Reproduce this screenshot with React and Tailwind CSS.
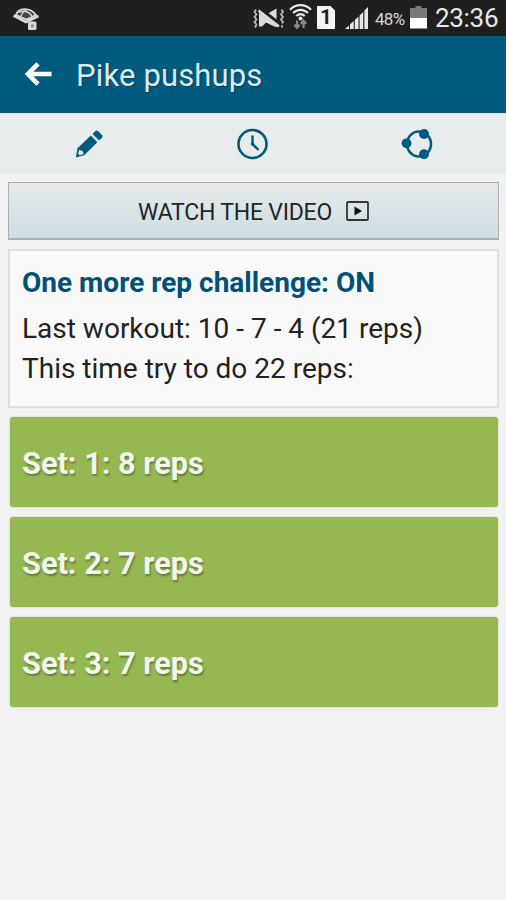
import React from 'react';

const sets = [
  { id: 1, reps: 8 },
  { id: 2, reps: 7 },
  { id: 3, reps: 7 },
];

const StatusBar = () => (
  <div className="h-9 bg-[#1f1f1f] flex items-center text-[#e8e8e8] whitespace-nowrap">
    <svg className="w-7 h-9 ml-3 shrink-0" viewBox="0 0 28 36" fill="none">
      <path d="M1.500 15.500 L14 22 L26.500 16" stroke="#dadada" strokeWidth="2.600" />
      <path d="M4 15 C6 7.500 18 7 24 15 L14.500 19.500 Z" fill="#444444" stroke="#dadada" strokeWidth="1.800" />
      <path d="M6.500 12.500 C10 10.500 16 10.500 20 16 M9 16.500 C10 13 12 11 15 9.500" stroke="#dadada" strokeWidth="1.300" />
      <rect x="16" y="21.500" width="8.500" height="8.500" rx="1.500" fill="#d8d8d8" />
      <rect x="19" y="24.500" width="2.800" height="2.800" fill="#8a8a8a" />
    </svg>

    <div className="flex-1" />

    {/* mute / vibrate */}
    <svg className="w-8 h-9 shrink-0" viewBox="0 0 32 36" fill="none">
      <path d="M3 9.500 L1.500 12 L3.500 14.500 L1.500 17 L3.500 19.500 L1.500 22 L3.500 24.500 L2 27.500 M28.500 9.500 L30 12 L28 14.500 L30 17 L28 19.500 L30 22 L28 24.500 L29.500 27.500" stroke="#b8b8b8" strokeWidth="1.800" />
      <path d="M6 11 V26.500 H9 L13 22.500 L23.500 27.500 V8.500 L14 14 Z" fill="#dcdcdc" />
      <path d="M5.500 8.500 L28 26" stroke="#1f1f1f" strokeWidth="5" />
      <path d="M5.500 10.500 L26 26.500" stroke="#dcdcdc" strokeWidth="2.500" />
    </svg>

    {/* wifi */}
    <svg className="w-6 h-9 ml-1 shrink-0" viewBox="0 0 24 36" fill="none">
      <path d="M1 9.700 C7 3.700 16 3.700 22 9.700 M4 13 C8.500 8.700 14.500 8.700 19 13 M7.300 16 C10 13.600 13 13.600 15.700 16" stroke="#e8e8e8" strokeWidth="2.300" />
      <circle cx="11.500" cy="18.500" r="2" fill="#e8e8e8" />
      <path d="M8 20.500 V27 M5.300 24.800 L8 27.800 L10.700 24.800 M14.500 28 V22 M11.800 23.700 L14.500 20.700 L17.200 23.700" stroke="#8b8b8b" strokeWidth="2.200" />
    </svg>

    {/* sim card */}
    <div className="relative w-[18px] h-[23px] ml-[4px] -mt-px shrink-0">
      <svg className="w-[18px] h-[23px]" viewBox="0 0 18 23">
        <path d="M0 1 Q0 0 1 0 H13.500 L18 4.500 V22 Q18 23 17 23 H1 Q0 23 0 22 Z" fill="#f5f5f5" />
      </svg>
      <span className="absolute inset-0 text-center text-[20px] leading-[23px] font-bold text-[#1f1f1f]">1</span>
    </div>

    {/* signal */}
    <svg className="w-[24px] h-9 ml-[10px] shrink-0" viewBox="0 0 24 36" fill="#e8e8e8">
      <path d="M0 29 L4 25.500 V29 Z" />
      <path d="M5 24.500 L8.700 21 V29 H5 Z" />
      <path d="M9.800 20 L13.500 16.500 V29 H9.800 Z" />
      <path d="M14.600 15.500 L18.200 12 V29 H14.600 Z" />
      <path d="M19.400 10.500 L23 7 V29 H19.400 Z" />
    </svg>

    <span className="w-[32px] ml-[6px] mt-[2px] text-[17px] leading-9 tracking-[-0.7px] text-[#d6d6d6] shrink-0">48%</span>

    <svg className="w-[17px] h-9 ml-[3px] shrink-0" viewBox="0 0 17 36">
      <path d="M0 8 H5.500 V6 H11.500 V8 H17 V18 H0 Z" fill="#7b7b7b" />
      <rect y="18" width="17" height="10.500" fill="#ffffff" />
    </svg>

    <span className="w-[63px] ml-[8px] mr-[8px] text-[26px] leading-9 tracking-[-0.3px] shrink-0">23:36</span>
  </div>
);

const Header = () => (
  <div className="h-[77px] bg-[#005b7e] border-b border-[#1e4d60] flex items-center">
    <svg className="w-[27px] h-[24px] ml-[25px] shrink-0" viewBox="0 0 27 24" fill="none" stroke="#ffffff" strokeWidth="4.600">
      <path d="M26.500 12 H3 M13 1.800 L3 12 L13 22.200" />
    </svg>
    <h1 className="ml-6 mt-[2px] text-[31px] leading-none tracking-[0.15px] text-[#dce9f0] whitespace-nowrap [text-shadow:1px_1px_1px_#00405a]">Pike pushups</h1>
  </div>
);

const Toolbar = () => (
  <div className="h-[61px] bg-[#e8eced] grid grid-cols-[178px_149px_179px] items-center justify-items-center">
    <svg className="w-7 h-7" viewBox="0 0 28 28" fill="#005b7e">
      <path fillRule="evenodd" d="M0.800 27.500 L2.500 18.300 L15.800 5.500 L22.300 12.300 L9.200 25.300 Z M4.200 19.800 L3.200 23.800 L4.800 25.200 L8.500 24 L7.600 21 Z" />
      <path d="M17.500 4 L20.500 1 Q21.800 0 23 1 L27.200 5.300 Q28 6.500 27 7.800 L24.200 10.500 Z" />
    </svg>
    <svg className="w-8 h-8" viewBox="0 0 32 32" fill="none" stroke="#005b7e">
      <circle cx="15.500" cy="16" r="14" strokeWidth="2.600" />
      <path d="M15.500 7.500 V16 L21.500 22" strokeWidth="2.400" />
      <circle cx="15.500" cy="16" r="1.800" fill="#005b7e" stroke="none" />
    </svg>
    <svg className="w-8 h-8" viewBox="0 0 32 32" fill="none">
      <ellipse cx="18" cy="16" rx="12" ry="12.500" stroke="#005b7e" strokeWidth="2.600" />
      <g fill="#005b7e">
        <circle cx="5.500" cy="15.300" r="4.900" />
        <circle cx="23" cy="6" r="5" />
        <circle cx="23" cy="26.300" r="5" />
      </g>
    </svg>
  </div>
);

const App = () => {
  return (
    <div className="w-full min-h-[900px] bg-[#f2f2f2] font-[Roboto,sans-serif]">
      <StatusBar />
      <Header />
      <Toolbar />

      <main className="pt-2 pl-2 pr-[7px]">
        <button className="w-full h-[58px] flex items-center border border-[#a8b0b4] border-b-2 bg-linear-to-b from-[#e5eaec] to-[#cfdde1] text-[#222527]">
          <span className="ml-[129px] mt-[5px] text-[23px] tracking-[-0.22px] whitespace-nowrap">WATCH THE VIDEO</span>
          <svg className="w-[23px] h-5 ml-auto mr-[129px]" viewBox="0 0 23 20" fill="none">
            <rect x="1" y="1" width="21" height="18" rx="1" stroke="#303538" strokeWidth="1.800" />
            <path d="M8.500 5.500 L16 10 L8.500 14.500 Z" fill="#111111" />
          </svg>
        </button>

        <section className="mt-[9px] h-[159px] border-2 border-[#e0e0e0] bg-[#f9f9f9] pl-3 pt-[12px] text-[28px] leading-10 text-[#222222] whitespace-nowrap">
          <h2 className="h-[46px] font-bold text-[#005078]">One more rep challenge: ON</h2>
          <p>Last workout: 10 - 7 - 4 (21 reps)</p>
          <p>This time try to do 22 reps:</p>
        </section>

        <ul className="mt-[9px] ml-0.5 mr-px space-y-[10px]">
          {sets.map((set) => (
            <li
              key={set.id}
              className="h-[90px] flex items-center rounded-[3px] bg-[#96b853] pl-3 pt-1 text-[30.7px] font-bold text-[#f2f6ec] whitespace-nowrap shadow-[0_0_2px_#b5c68f] [text-shadow:1px_2px_2px_#647b37]"
            >
              Set: {set.id}: {set.reps} reps
            </li>
          ))}
        </ul>
      </main>
    </div>
  );
};

export default App;
